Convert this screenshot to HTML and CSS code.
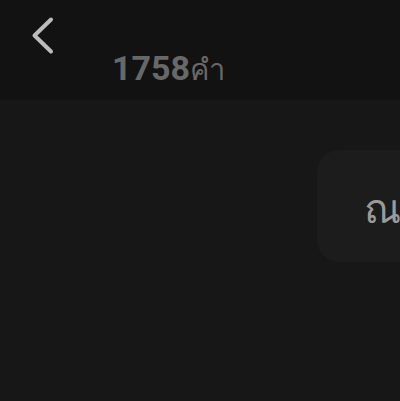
FILE: index.html
```html
<!DOCTYPE html>
<html lang="th">
<head>
<meta charset="utf-8">
<link rel="stylesheet" href="styles.css">
</head>
<body>
<header class="top">
  <button class="back" aria-label="back">
    <svg width="30" height="44" viewBox="0 0 30 44"><path d="M20 3.5 L3.5 19.5 L20 35.5" fill="none" stroke="#bcbcbc" stroke-width="4" stroke-linecap="round" stroke-linejoin="round"/></svg>
  </button>
  <div class="count">1758<span class="unit">คำ</span></div>
</header>
<main class="body">
  <div class="card">ณเ</div>
</main>
</body>
</html>
```
FILE: styles.css
```css
html, body {
  margin: 0;
  padding: 0;
  background: #171717;
  width: 400px;
  height: 401px;
  overflow: hidden;
  font-family: Roboto, "Noto Sans", sans-serif;
}
.top {
  height: 100px;
  background: #121212;
  display: flex;
  flex-direction: column;
  box-sizing: border-box;
  padding: 16px 0 0 31px;
}
.back {
  background: none;
  border: 0;
  padding: 0;
  width: 30px;
  height: 40px;
  display: block;
}
.count {
  margin-left: 81px;
  margin-top: -6px;
  font-size: 34px;
  font-weight: 700;
  color: #686868;
  line-height: 36px;
}
.unit {
  font-weight: 500;
  font-size: 29px;
}
.body {
  padding-top: 50px;
  display: flex;
  justify-content: flex-end;
}
.card {
  width: 120px;
  margin-right: -37px;
  height: 112px;
  background: #1c1c1c;
  border-radius: 22px;
  box-sizing: border-box;
  padding-left: 47px;
  padding-top: 6px;
  display: flex;
  align-items: center;
  font-size: 40px;
  color: #9a9a9a;
  white-space: nowrap;
  overflow: hidden;
}
```
